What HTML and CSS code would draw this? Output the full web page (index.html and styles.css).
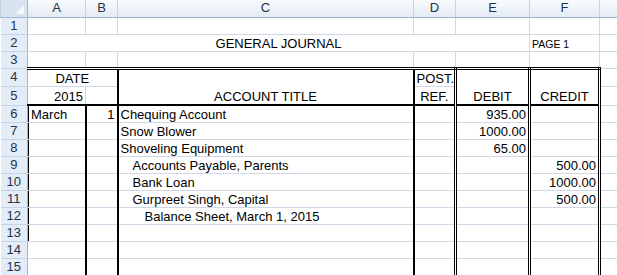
FILE: index.html
```html
<!DOCTYPE html>
<html lang="en">

<head>
    <meta charset="UTF-8">
    <title>General Journal</title>
    <link rel="stylesheet" href="styles.css">
</head>

<body>
    <table class="sheet">
        <colgroup>
            <col class="col-hdr">
            <col class="col-a">
            <col class="col-b">
            <col class="col-c">
            <col class="col-d">
            <col class="col-e">
            <col class="col-f">
            <col class="col-g">
        </colgroup>
        <thead>
            <tr class="col-heads">
                <th class="corner"></th>
                <th>A</th>
                <th>B</th>
                <th>C</th>
                <th>D</th>
                <th>E</th>
                <th>F</th>
                <th></th>
            </tr>
        </thead>
        <tbody>
            <tr>
                <th>1</th>
                <td></td><td></td><td></td><td></td><td></td><td></td><td></td>
            </tr>
            <tr>
                <th>2</th>
                <td colspan="5" class="center">GENERAL JOURNAL</td>
                <td class="page">PAGE 1</td>
                <td></td>
            </tr>
            <tr>
                <th>3</th>
                <td></td><td></td><td></td><td></td><td></td><td></td><td></td>
            </tr>
            <!-- journal heading, two rows -->
            <tr class="row-tall">
                <th>4</th>
                <td colspan="2" class="top thick center">DATE</td>
                <td rowspan="2" class="top thick base center">ACCOUNT TITLE</td>
                <td class="top dbl">POST.</td>
                <td rowspan="2" class="top dbl base center">DEBIT</td>
                <td rowspan="2" class="top dbl base center">CREDIT</td>
                <td></td>
            </tr>
            <tr class="row-taller">
                <th>5</th>
                <td class="base right">2015</td>
                <td class="base thick"></td>
                <td class="base dbl center">REF.</td>
                <td></td>
            </tr>
            <!-- entries -->
            <tr>
                <th>6</th>
                <td class="edge thick">March</td>
                <td class="thick right">1</td>
                <td class="thick">Chequing Account</td>
                <td class="dbl"></td>
                <td class="dbl right">935.00</td>
                <td class="dbl"></td>
                <td></td>
            </tr>
            <tr>
                <th>7</th>
                <td class="edge thick"></td>
                <td class="thick"></td>
                <td class="thick">Snow Blower</td>
                <td class="dbl"></td>
                <td class="dbl right">1000.00</td>
                <td class="dbl"></td>
                <td></td>
            </tr>
            <tr>
                <th>8</th>
                <td class="edge thick"></td>
                <td class="thick"></td>
                <td class="thick">Shoveling Equipment</td>
                <td class="dbl"></td>
                <td class="dbl right">65.00</td>
                <td class="dbl"></td>
                <td></td>
            </tr>
            <tr>
                <th>9</th>
                <td class="edge thick"></td>
                <td class="thick"></td>
                <td class="thick indent">Accounts Payable, Parents</td>
                <td class="dbl"></td>
                <td class="dbl"></td>
                <td class="dbl right">500.00</td>
                <td></td>
            </tr>
            <tr>
                <th>10</th>
                <td class="edge thick"></td>
                <td class="thick"></td>
                <td class="thick indent">Bank Loan</td>
                <td class="dbl"></td>
                <td class="dbl"></td>
                <td class="dbl right">1000.00</td>
                <td></td>
            </tr>
            <tr>
                <th>11</th>
                <td class="edge thick"></td>
                <td class="thick"></td>
                <td class="thick indent">Gurpreet Singh, Capital</td>
                <td class="dbl"></td>
                <td class="dbl"></td>
                <td class="dbl right">500.00</td>
                <td></td>
            </tr>
            <tr>
                <th>12</th>
                <td class="edge thick"></td>
                <td class="thick"></td>
                <td class="thick indent-2">Balance Sheet, March 1, 2015</td>
                <td class="dbl"></td>
                <td class="dbl"></td>
                <td class="dbl"></td>
                <td></td>
            </tr>
            <tr>
                <th>13</th>
                <td class="edge thick"></td>
                <td class="thick"></td>
                <td class="thick"></td>
                <td class="dbl"></td>
                <td class="dbl"></td>
                <td class="dbl"></td>
                <td></td>
            </tr>
            <tr>
                <th>14</th>
                <td class="thick"></td>
                <td class="thick"></td>
                <td class="thick"></td>
                <td class="dbl"></td>
                <td class="dbl"></td>
                <td class="dbl"></td>
                <td></td>
            </tr>
            <tr>
                <th>15</th>
                <td class="thick"></td>
                <td class="thick"></td>
                <td class="thick"></td>
                <td class="dbl"></td>
                <td class="dbl"></td>
                <td class="dbl"></td>
                <td></td>
            </tr>
        </tbody>
    </table>
</body>

</html>
```

FILE: styles.css
```css
body {
    margin: 0;
    background-color: #fff;
    overflow: hidden;
    font-family: "Liberation Sans", Arial, sans-serif;
}

/* Sheet grid */
.sheet {
    border-collapse: collapse;
    table-layout: fixed;
    width: 640px;
    font-size: 13px;
    color: #000;
}

.col-hdr { width: 27px; }
.col-a { width: 58px; }
.col-b { width: 32px; }
.col-c { width: 296px; }
.col-d { width: 42px; }
.col-e { width: 74px; }
.col-f { width: 70px; }
.col-g { width: 41px; }

.sheet tr {
    height: 17px;
}

.sheet tr.row-tall {
    height: 18px;
}

.sheet tr.row-taller {
    height: 19px;
}

.sheet td {
    border: 1px solid #d0d7e5;
    padding: 0 2px;
    line-height: 14px;
    vertical-align: bottom;
    white-space: nowrap;
    overflow: hidden;
}

/* Row and column headings */
.sheet th {
    font-weight: normal;
    color: #23324a;
    padding: 0;
    line-height: 14px;
    text-align: center;
    vertical-align: middle;
}

.col-heads th {
    background: linear-gradient(#f9fbfd, #e3eaf4);
    border-left: 1px solid #c5d2e3;
    border-right: 1px solid #c5d2e3;
    border-bottom: 1px solid #9eb6ce;
}

tbody th {
    background-color: #e4ecf7;
    border-bottom: 1px solid #c5d2e3;
    border-right: 1px solid #9eb6ce;
    padding-top: 1px;
}

.corner {
    position: relative;
    background: #dae4f1 !important;
    border-right: 1px solid #9eb6ce !important;
}

.corner::after {
    content: "";
    position: absolute;
    right: 3px;
    bottom: 3px;
    border-style: solid;
    border-width: 0 0 9px 9px;
    border-color: transparent transparent #f4f7fb transparent;
}

/* Journal borders */
.sheet td.top {
    border-top: 3px double #000;
}

.sheet td.base {
    border-bottom: 2px solid #000;
}

.sheet td.thick {
    border-right: 2px solid #000;
}

.sheet td.dbl {
    border-right: 3px double #000;
}

/* thin rule down the left of the date column */
.sheet td.edge {
    box-shadow: inset 1px 0 #000;
    padding-left: 3px;
}

/* Alignment */
.center {
    text-align: center;
}

.right {
    text-align: right;
}

.page {
    font-size: 10.5px;
}

.sheet td.indent {
    padding-left: 14px;
}

.sheet td.indent-2 {
    padding-left: 26px;
}
```
